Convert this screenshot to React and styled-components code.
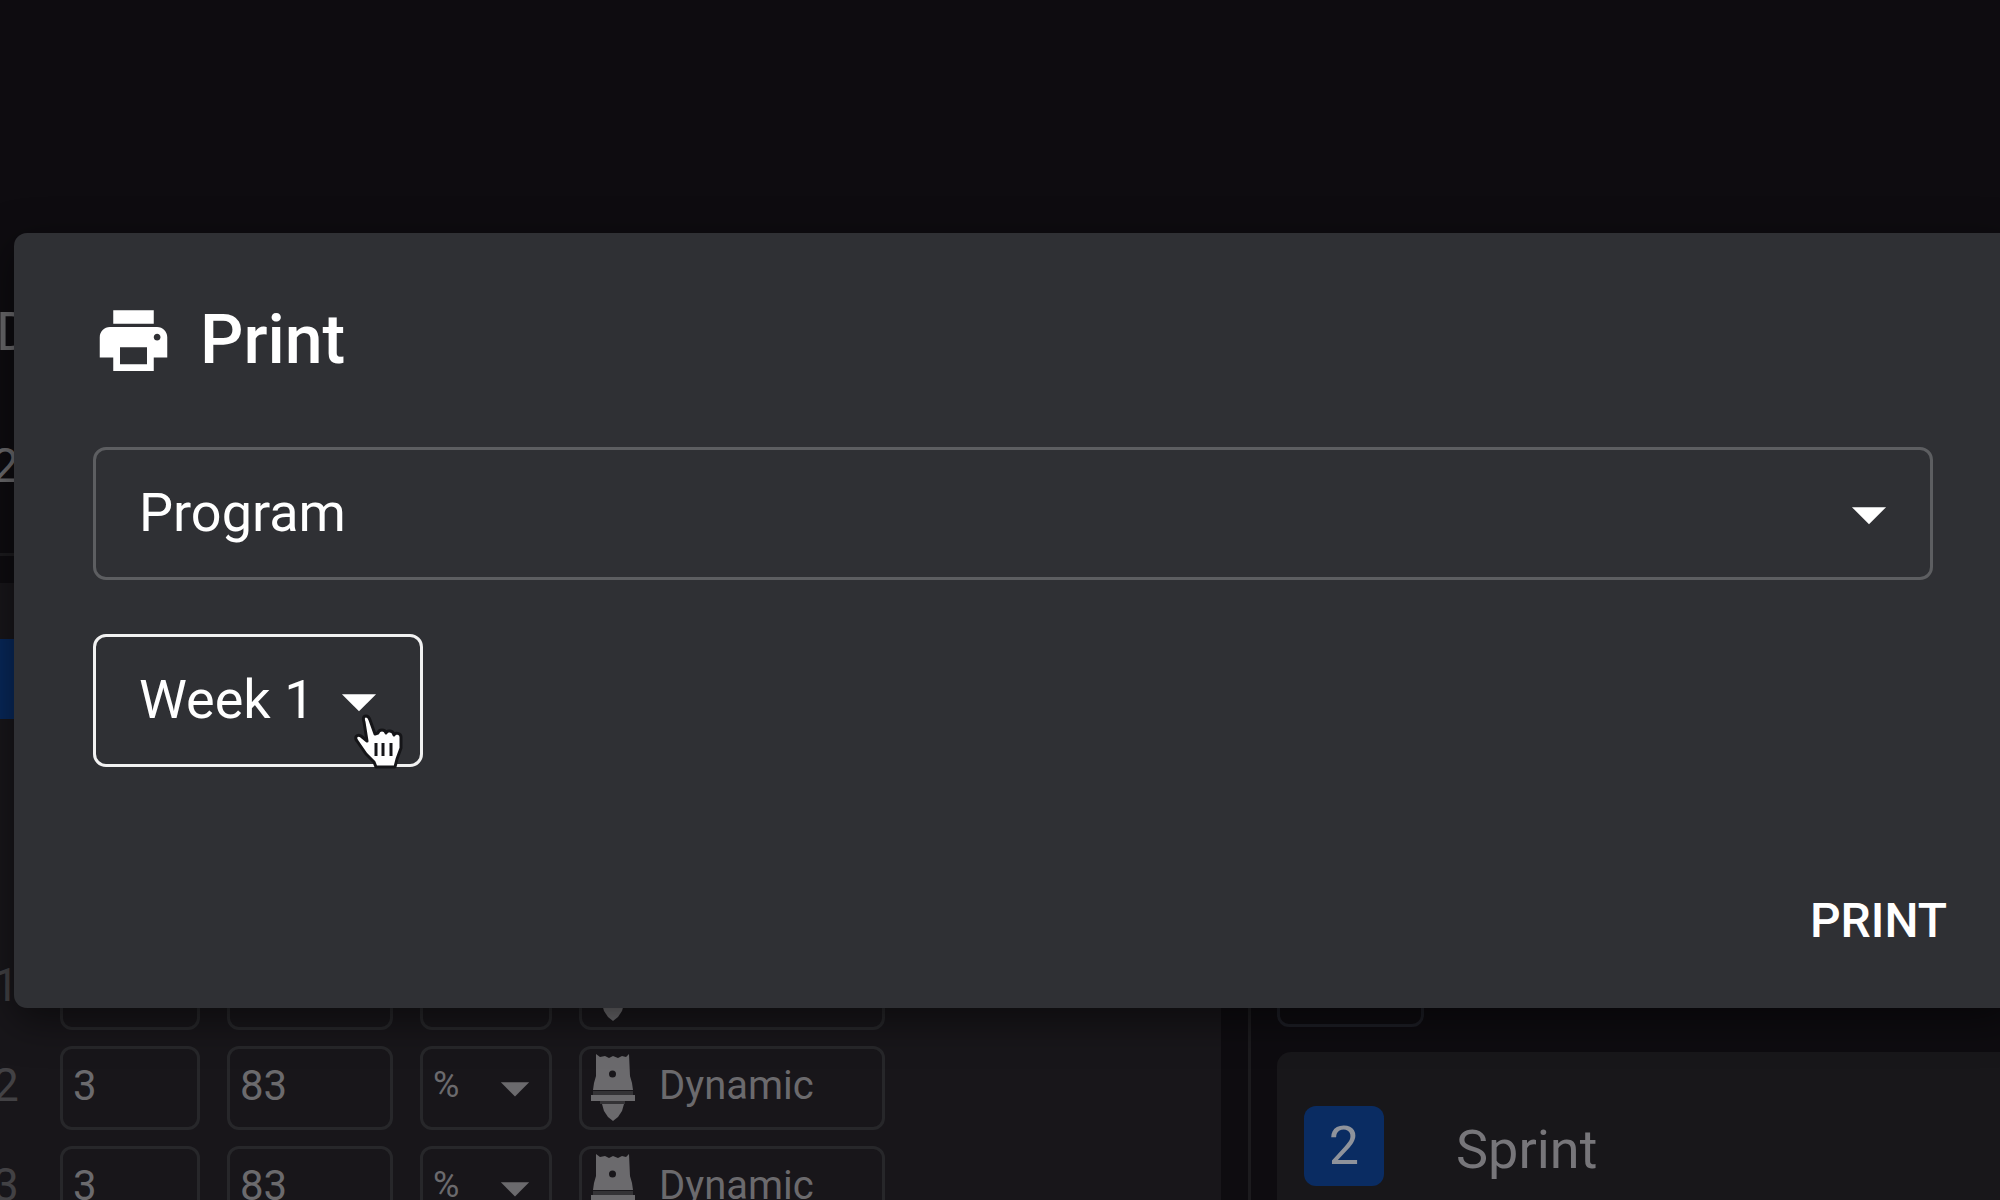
import React, { useState } from "react";
import styled, { createGlobalStyle } from "styled-components";

const sets = [
  { no: 1, reps: 3, load: 83 },
  { no: 2, reps: 3, load: 83 },
  { no: 3, reps: 3, load: 83 },
];

const Arrow = () => (
  <ArrowIcon viewBox="0 0 24 24" aria-hidden="true">
    <path d="M7 10l5 5 5-5z" />
  </ArrowIcon>
);

const Barbell = () => (
  <BarbellIcon viewBox="0 0 44 68" aria-hidden="true">
    <path
      fillRule="evenodd"
      d="M5 0L9 3L14 2L18 4L22 2L27 4L31 2L35 3L38 0L39 22L41 29L42 36H2L3 29L5 22ZM21.500 16.500a3.500 3.500 0 1 0 0 7a3.500 3.500 0 1 0 0-7z"
    />
    <rect x="2" y="37" width="40" height="4" opacity="0.35" />
    <rect x="0" y="41" width="44" height="6" />
    <rect x="9" y="47" width="25" height="3" opacity="0.35" />
    <path d="M11 50H33L31 57L27 63L22 67L17 63L13 57Z" />
  </BarbellIcon>
);

const SetRow = ({ item }) => (
  <Row>
    <RowNumber>{item.no}</RowNumber>
    <Field $width={140} aria-label={`Reps ${item.no}`} defaultValue={item.reps} />
    <Field $width={166} aria-label={`Load ${item.no}`} defaultValue={item.load} />
    <Unit>
      <UnitSelect aria-label={`Unit ${item.no}`}>
        <option>%</option>
      </UnitSelect>
      <Arrow />
    </Unit>
    <EffortButton type="button">
      <Barbell />
      <EffortName>Dynamic</EffortName>
    </EffortButton>
  </Row>
);

const App = () => {
  const [type, setType] = useState("Program");
  const [week, setWeek] = useState("Week 1");

  return (
    <>
      <GlobalStyle />
      <Page>
        <Columns>
          <Main>
            <Summary>
              <SummaryText $large>D</SummaryText>
              <SummaryText>2</SummaryText>
            </Summary>
            <Workout>
              <Marker />
              <Rows>
                {sets.map((item) => (
                  <SetRow key={item.no} item={item} />
                ))}
              </Rows>
            </Workout>
          </Main>
          <Side>
            <Outline />
            <Card>
              <Badge>2</Badge>
              <Exercise>Sprint</Exercise>
            </Card>
          </Side>
        </Columns>
        <Dialog role="dialog" aria-labelledby="print-title">
          <Header>
            <PrintIcon viewBox="0 0 24 24" aria-hidden="true">
              <path d="M19 8H5c-1.660 0-3 1.340-3 3v6h4v4h12v-4h4v-6c0-1.660-1.340-3-3-3zm-3 11H8v-5h8v5zm3-7c-.550 0-1-.450-1-1s.450-1 1-1 1 .450 1 1-.450 1-1 1zm-1-9H6v4h12V3z" />
            </PrintIcon>
            <Title id="print-title">Print</Title>
          </Header>
          <SelectBox>
            <Select aria-label="Type" value={type} onChange={(e) => setType(e.target.value)}>
              <option>Program</option>
            </Select>
            <Arrow />
          </SelectBox>
          <SelectBox $focused>
            <Select aria-label="Week" value={week} onChange={(e) => setWeek(e.target.value)}>
              <option>Week 1</option>
            </Select>
            <Arrow />
            <Pointer viewBox="0 0 52 58" aria-hidden="true">
              <path d="M14 4C11 4 11 7 12 10L15 29L9 24C5 22 2 25 5 29L14 42L22 50L24 55H43L45 47L49 36V25C49 21 43 20 42 23C41 18 35 18 34 21C33 17 27 17 26 21L23 22L18 8C17 5 16 4 14 4Z" />
              <Creases d="M24 31V44M31 31V44M39 31V44" />
            </Pointer>
          </SelectBox>
          <Actions>
            <PrintButton type="button">PRINT</PrintButton>
          </Actions>
        </Dialog>
      </Page>
    </>
  );
};

export default App;

const GlobalStyle = createGlobalStyle`
  * {
    box-sizing: border-box;
  }
  body {
    margin: 0;
    background: #0e0c10;
    font-family: Roboto, sans-serif;
  }
  button, input, select {
    font-family: inherit;
    margin: 0;
  }
`;

const Page = styled.div`
  position: relative;
  height: 100vh;
  overflow: hidden;
  background: #0e0c10;
`;

const Columns = styled.div`
  display: grid;
  grid-template-columns: 1248px 1fr;
  height: 100%;
`;

const Main = styled.div`
  padding: 300px 27px 0 0;
`;

const Summary = styled.div`
  display: flex;
  flex-direction: column;
  gap: 70px;
  height: 256px;
  border-bottom: 3px solid #1c1b1e;
`;

const SummaryText = styled.span`
  margin-left: ${(props) => (props.$large ? "-4px" : "-8px")};
  font-size: ${(props) => (props.$large ? "54px" : "48px")};
  line-height: 64px;
  color: #6b6a6d;
`;

const Workout = styled.div`
  margin-top: 27px;
  padding-top: 56px;
  background: #18161a;
`;

const Marker = styled.div`
  width: 60px;
  height: 80px;
  background: #08285a;
`;

const Rows = styled.div`
  display: flex;
  flex-direction: column;
  gap: 16px;
  padding-top: 227px;
`;

const Row = styled.div`
  display: flex;
  align-items: center;
  gap: 27px;
  height: 84px;
`;

const RowNumber = styled.span`
  width: 60px;
  margin-right: -27px;
  padding-bottom: 6px;
  text-indent: -7px;
  font-size: 46px;
  color: #424144;
`;

const Field = styled.input`
  width: ${(props) => props.$width}px;
  height: 84px;
  padding: 0 0 6px 10px;
  border: 3px solid #27272a;
  border-radius: 12px;
  background: transparent;
  color: #6b6a6d;
  font-size: 42px;
`;

const ArrowIcon = styled.svg`
  flex: none;
  width: 82px;
  height: 82px;
  fill: currentColor;
  pointer-events: none;
`;

const Unit = styled.div`
  display: flex;
  align-items: center;
  width: 132px;
  height: 84px;
  border: 3px solid #27272a;
  border-radius: 12px;
  color: #6b6a6d;

  ${ArrowIcon} {
    width: 68px;
    height: 68px;
    margin-left: -2px;
  }
`;

const UnitSelect = styled.select`
  appearance: none;
  width: 60px;
  padding: 0 0 6px 10px;
  border: 0;
  background: transparent;
  color: inherit;
  font-size: 36px;
`;

const EffortButton = styled.button`
  display: flex;
  align-items: center;
  gap: 24px;
  width: 306px;
  height: 84px;
  padding: 0 0 0 9px;
  border: 3px solid #27272a;
  border-radius: 12px;
  background: transparent;
  color: #6b6a6d;
  font-size: 40px;
`;

const EffortName = styled.span`
  padding-bottom: 6px;
`;

const BarbellIcon = styled.svg`
  width: 44px;
  height: 68px;
  fill: currentColor;
`;

const Side = styled.div`
  display: flex;
  flex-direction: column;
  gap: 25px;
  margin-top: 300px;
  padding: 647px 0 0 26px;
  border-left: 3px solid #1c1b1e;
`;

const Outline = styled.div`
  flex: none;
  width: 147px;
  height: 80px;
  border: 3px solid #1d1e25;
  border-radius: 12px;
`;

const Card = styled.div`
  display: flex;
  flex: 1;
  align-items: flex-start;
  gap: 72px;
  padding: 54px 27px;
  border-radius: 14px 0 0 0;
  background: #18171a;
  color: #77767a;
  font-size: 54px;
  line-height: 80px;
`;

const Badge = styled.span`
  width: 80px;
  height: 80px;
  border-radius: 12px;
  background: #0a2c62;
  color: #8f939b;
  text-align: center;
`;

const Exercise = styled.span`
  padding-top: 4px;
`;

const Dialog = styled.section`
  position: absolute;
  top: 233px;
  left: 14px;
  right: -14px;
  padding: 66px 81px 30px 79px;
  border-radius: 13px;
  background: #2f3034;
  box-shadow: 0 12px 40px rgba(0, 0, 0, 0.5);
  color: #fff;
`;

const Header = styled.header`
  display: flex;
  align-items: center;
  gap: 26px;
  height: 82px;
  margin-bottom: 66px;
`;

const PrintIcon = styled.svg`
  width: 81px;
  height: 81px;
  fill: currentColor;
`;

const Title = styled.h2`
  margin: 0;
  font-size: 68px;
  font-weight: 500;
  line-height: 84px;
`;

const SelectBox = styled.div`
  position: relative;
  display: flex;
  align-items: center;
  width: ${(props) => (props.$focused ? "fit-content" : "100%")};
  height: 133px;
  margin-bottom: 54px;
  padding-right: 20px;
  border: 3px solid ${(props) => (props.$focused ? "#f2f2f2" : "#5d5e61")};
  border-radius: 13px;
`;

const Select = styled.select`
  appearance: none;
  flex: 1;
  height: 100%;
  padding: 0 3px 3px 43px;
  border: 0;
  outline: 0;
  background: transparent;
  color: #fff;
  font-size: 54px;
`;

const Pointer = styled.svg`
  position: absolute;
  right: 16px;
  bottom: -6px;
  width: 52px;
  height: 58px;
  fill: #fff;
  stroke: #151518;
  stroke-width: 3;
  stroke-linejoin: round;
  pointer-events: none;
`;

const Creases = styled.path`
  fill: none;
`;

const Actions = styled.div`
  display: flex;
  justify-content: flex-end;
  margin-right: -14px;
  padding-top: 43px;
`;

const PrintButton = styled.button`
  padding: 16px 0;
  border: 0;
  background: transparent;
  color: #fff;
  font-size: 48px;
  font-weight: 500;
  line-height: 82px;
`;
